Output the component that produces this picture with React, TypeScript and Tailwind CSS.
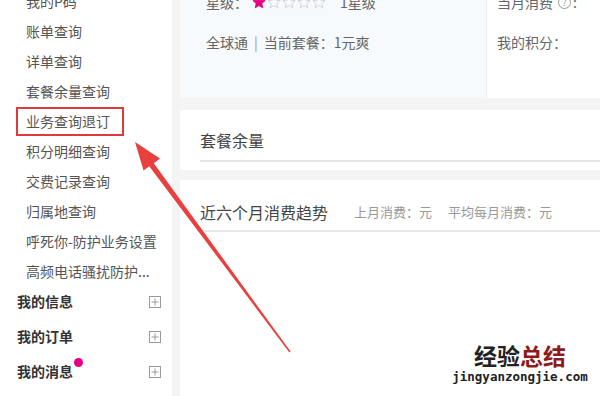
import React from "react";

const font = { fontFamily: '"Noto Sans CJK SC", "Liberation Sans", sans-serif' };

const items = [
  "我的P码",
  "账单查询",
  "详单查询",
  "套餐余量查询",
  "业务查询退订",
  "积分明细查询",
  "交费记录查询",
  "归属地查询",
  "呼死你-防护业务设置",
  "高频电话骚扰防护...",
];

function PlusBox() {
  return (
    <svg width="12" height="12" viewBox="0 0 12 12" className="shrink-0">
      <rect x="0.5" y="0.5" width="11" height="11" fill="none" stroke="#9a9a9a" strokeWidth="1" />
      <line x1="6" y1="2.5" x2="6" y2="9.5" stroke="#9a9a9a" strokeWidth="1" />
      <line x1="2.5" y1="6" x2="9.5" y2="6" stroke="#9a9a9a" strokeWidth="1" />
    </svg>
  );
}

function Star({ filled }: { filled: boolean }) {
  return (
    <svg width="14" height="14" viewBox="0 0 24 24" className="shrink-0">
      <polygon
        points="12,2 14.9,8.9 22.5,9.6 16.8,14.6 18.5,22 12,18.1 5.5,22 7.2,14.6 1.5,9.6 9.1,8.9"
        fill={filled ? "#e5007f" : "none"}
        stroke={filled ? "#e5007f" : "#cfcfcf"}
        strokeWidth="1.5"
        strokeLinejoin="round"
      />
    </svg>
  );
}

export default function App() {
  return (
    <div className="relative w-[600px] h-[396px] overflow-hidden bg-[#f4f4f4] flex" style={font}>
      {/* Sidebar */}
      <div className="w-[172px] bg-white shrink-0 flex flex-col">
        <div className="mt-[-14px] flex flex-col">
          {items.map((t, i) => (
            <div key={t} className="relative h-[30px] leading-[30px] pl-[26px] text-[14px] text-[#555] whitespace-nowrap">
              {t}
              {i === 4 && (
                <div className="absolute left-[16px] top-[1px] w-[108px] h-[29px] border-2 border-[#e0393a]" />
              )}
            </div>
          ))}
          <div className="mt-[-2px] flex flex-col">
            {["我的信息", "我的订单", "我的消息"].map((t, i) => (
              <div key={t} className="h-[35px] flex items-center justify-between pl-[17px] pr-[11px]">
                <span className="relative text-[14px] font-bold text-[#333]">
                  {t}
                  {i === 2 && (
                    <span className="absolute right-[-10px] top-[-3px] w-[9px] h-[9px] rounded-full bg-[#e4007f]" />
                  )}
                </span>
                <PlusBox />
              </div>
            ))}
          </div>
        </div>
      </div>

      {/* Main */}
      <div className="flex-1 ml-[8px] flex flex-col min-w-0">
        {/* Top card */}
        <div className="h-[98px] flex shrink-0">
          <div className="w-[307px] bg-[#f7fafd] border-r border-[#ececec] pl-[26px]">
            <div className="mt-[-8px] h-[20px] flex items-center text-[14px] text-[#666] whitespace-nowrap">
              <span>星级：</span>
              <span className="flex ml-[4px] gap-[1px]">
                <Star filled />
                <Star filled={false} />
                <Star filled={false} />
                <Star filled={false} />
                <Star filled={false} />
              </span>
              <span className="ml-[14px]">1星级</span>
            </div>
            <div className="mt-[20px] h-[20px] flex items-center text-[14px] text-[#666] whitespace-nowrap">
              <span>全球通</span>
              <span className="mx-[6px] text-[#999]">|</span>
              <span>当前套餐：1元爽</span>
            </div>
          </div>
          <div className="flex-1 bg-white pl-[10px]">
            <div className="mt-[-8px] h-[20px] flex items-center text-[14px] text-[#666] whitespace-nowrap">
              <span>当月消费</span>
              <span className="ml-[5px] w-[13px] h-[13px] rounded-full border border-[#999] text-[9px] leading-[11px] text-center text-[#999]">?</span>
              <span className="ml-[2px]">:</span>
            </div>
            <div className="mt-[20px] h-[20px] leading-[20px] text-[14px] text-[#666] whitespace-nowrap">
              我的积分：
            </div>
          </div>
        </div>

        {/* 套餐余量 */}
        <div className="mt-[12px] h-[60px] bg-white pl-[20px] pt-[18px] shrink-0">
          <div className="h-[24px] leading-[24px] text-[16px] text-[#444]">套餐余量</div>
          <div className="mt-[8px] h-[2px] bg-[#e4e4e4]" />
        </div>

        {/* 近六个月消费趋势 */}
        <div className="mt-[10px] flex-1 bg-white pl-[20px] pt-[20px]">
          <div className="h-[24px] flex items-center whitespace-nowrap">
            <span className="text-[16px] text-[#444]">近六个月消费趋势</span>
            <span className="ml-[26px] text-[13px] text-[#999]">上月消费：元</span>
            <span className="ml-[16px] text-[13px] text-[#999]">平均每月消费：元</span>
          </div>
          <div className="mt-[6px] h-[2px] bg-[#e8e8e8]" />
        </div>
      </div>

      {/* Arrow annotation */}
      <svg className="absolute inset-0 pointer-events-none" width="600" height="396" viewBox="0 0 600 396">
        <polygon
          points="135,142 160,158.6 153.8,163.2 290.6,351.6 289.4,352.4 149.2,166.2 143.6,170.4"
          fill="#e8403f"
        />
      </svg>

      {/* Watermark */}
      <div className="absolute left-[450px] top-[341px] w-[140px] flex flex-col items-center pointer-events-none">
        <div className="text-[23px] font-bold leading-[28px]">
          <span className="text-[#222]">经验</span>
          <span className="text-[#8e1b1b]">总结</span>
        </div>
        <div
          className="text-[12.5px] font-bold leading-[16px] text-[#222]"
          style={{ fontFamily: '"DejaVu Sans Mono", monospace' }}
        >
          jingyanzongjie.com
        </div>
      </div>
    </div>
  );
}
